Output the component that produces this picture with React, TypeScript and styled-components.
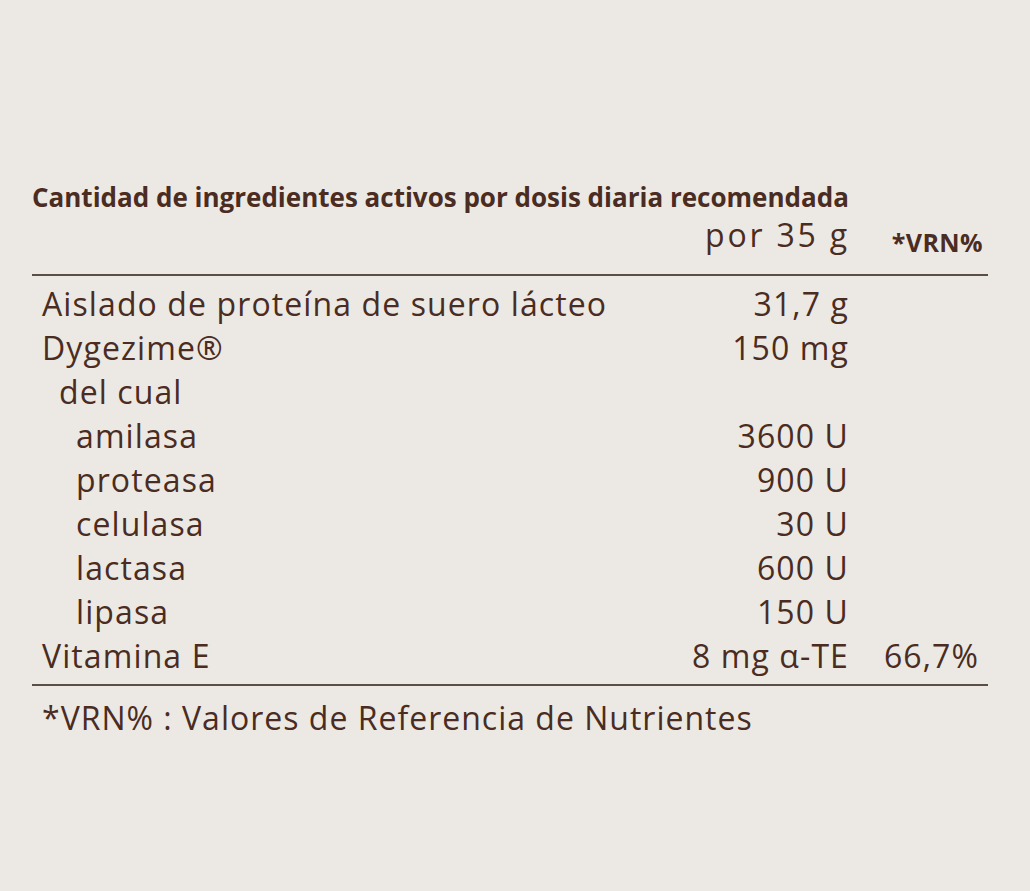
import React from "react";
import styled, { createGlobalStyle } from "styled-components";

const Global = createGlobalStyle`
  html, body { margin: 0; padding: 0; background: #ece9e4; }
  body { font-family: "Open Sans", "Liberation Sans", sans-serif; color: #4a2c22; }
`;

const Page = styled.div`
  width: 1030px;
  height: 891px;
  box-sizing: border-box;
  padding: 181px 42px 0 32px;
`;

const Title = styled.h2`
  margin: 0;
  font-size: 26px;
  line-height: 32px;
  font-weight: 700;
  white-space: nowrap;
`;

const HeadRow = styled.div`
  display: grid;
  grid-template-columns: 1fr auto 140px;
  align-items: start;
  padding-bottom: 10px;
  border-bottom: 2px solid #5b4e47;
`;

const PerDose = styled.div`
  grid-column: 2;
  font-size: 32px;
  line-height: 44px;
  font-weight: 400;
  letter-spacing: 2.8px;
  margin-right: -2px;
  text-align: right;
`;

const VrnHead = styled.div`
  grid-column: 3;
  font-size: 25px;
  line-height: 44px;
  font-weight: 700;
  letter-spacing: 0.4px;
  text-align: right;
  padding-top: 7px;
  padding-right: 5px;
`;

const Body = styled.div`
  padding: 6px 0 6px;
  border-bottom: 2px solid #5b4e47;
`;

const Row = styled.div`
  display: grid;
  grid-template-columns: 1fr auto 140px;
  align-items: center;
  height: 44px;
  line-height: 44px;
  font-size: 32px;
  letter-spacing: 1.1px;
`;

const Label = styled.div<{ $indent: number }>`
  padding-left: ${(p) => 10 + p.$indent * 17}px;
  white-space: nowrap;
`;

const Value = styled.div`
  text-align: right;
  white-space: nowrap;
  margin-right: -1px;
`;

const Vrn = styled.div`
  text-align: right;
  padding-right: 9px;
`;

const Footnote = styled.p`
  margin: 0;
  padding: 10px 0 0 10px;
  font-size: 32px;
  line-height: 44px;
  letter-spacing: 1px;
  white-space: nowrap;
`;

const rows: { label: string; indent: number; value: string; vrn?: string }[] = [
  { label: "Aislado de proteína de suero lácteo", indent: 0, value: "31,7 g" },
  { label: "Dygezime®", indent: 0, value: "150 mg" },
  { label: "del cual", indent: 1, value: "" },
  { label: "amilasa", indent: 2, value: "3600 U" },
  { label: "proteasa", indent: 2, value: "900 U" },
  { label: "celulasa", indent: 2, value: "30 U" },
  { label: "lactasa", indent: 2, value: "600 U" },
  { label: "lipasa", indent: 2, value: "150 U" },
  { label: "Vitamina E", indent: 0, value: "8 mg α-TE", vrn: "66,7%" },
];

export default function App() {
  return (
    <Page>
      <Global />
      <Title>Cantidad de ingredientes activos por dosis diaria recomendada</Title>
      <HeadRow>
        <PerDose>por 35 g</PerDose>
        <VrnHead>*VRN%</VrnHead>
      </HeadRow>
      <Body>
        {rows.map((r) => (
          <Row key={r.label}>
            <Label $indent={r.indent}>{r.label}</Label>
            <Value>{r.value}</Value>
            <Vrn>{r.vrn ?? ""}</Vrn>
          </Row>
        ))}
      </Body>
      <Footnote>*VRN% : Valores de Referencia de Nutrientes</Footnote>
    </Page>
  );
}
